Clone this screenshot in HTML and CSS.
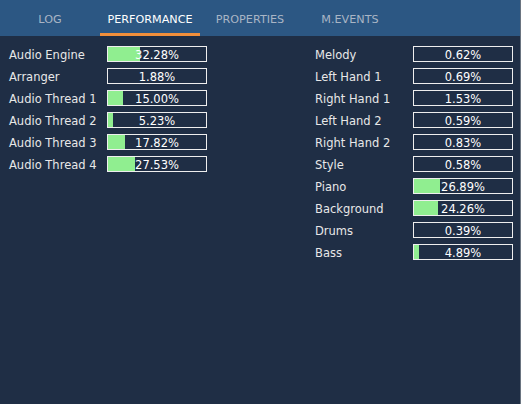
FILE: index.html
```html
<!DOCTYPE html>
<html lang="en">
<head>
    <meta charset="UTF-8">
    <title>Performance</title>
    <link rel="stylesheet" href="styles.css">
</head>
<body>
    <div class="panel">
        <div class="tabs">
            <div class="tab">LOG</div>
            <div class="tab active">PERFORMANCE</div>
            <div class="tab">PROPERTIES</div>
            <div class="tab">M.EVENTS</div>
        </div>

        <div class="content">
            <div class="column">
                <div class="row"><span class="label">Audio Engine</span><div class="bar"><div class="fill" style="width: 32.28%"></div><span>32.28%</span></div></div>
                <div class="row"><span class="label">Arranger</span><div class="bar"><div class="fill" style="width: 0%"></div><span>1.88%</span></div></div>
                <div class="row"><span class="label">Audio Thread 1</span><div class="bar"><div class="fill" style="width: 15%"></div><span>15.00%</span></div></div>
                <div class="row"><span class="label">Audio Thread 2</span><div class="bar"><div class="fill" style="width: 5.23%"></div><span>5.23%</span></div></div>
                <div class="row"><span class="label">Audio Thread 3</span><div class="bar"><div class="fill" style="width: 17.82%"></div><span>17.82%</span></div></div>
                <div class="row"><span class="label">Audio Thread 4</span><div class="bar"><div class="fill" style="width: 27.53%"></div><span>27.53%</span></div></div>
            </div>
            <div class="column">
                <div class="row"><span class="label">Melody</span><div class="bar"><div class="fill" style="width: 0%"></div><span>0.62%</span></div></div>
                <div class="row"><span class="label">Left Hand 1</span><div class="bar"><div class="fill" style="width: 0%"></div><span>0.69%</span></div></div>
                <div class="row"><span class="label">Right Hand 1</span><div class="bar"><div class="fill" style="width: 0%"></div><span>1.53%</span></div></div>
                <div class="row"><span class="label">Left Hand 2</span><div class="bar"><div class="fill" style="width: 0%"></div><span>0.59%</span></div></div>
                <div class="row"><span class="label">Right Hand 2</span><div class="bar"><div class="fill" style="width: 0%"></div><span>0.83%</span></div></div>
                <div class="row"><span class="label">Style</span><div class="bar"><div class="fill" style="width: 0%"></div><span>0.58%</span></div></div>
                <div class="row"><span class="label">Piano</span><div class="bar"><div class="fill" style="width: 26.89%"></div><span>26.89%</span></div></div>
                <div class="row"><span class="label">Background</span><div class="bar"><div class="fill" style="width: 24.26%"></div><span>24.26%</span></div></div>
                <div class="row"><span class="label">Drums</span><div class="bar"><div class="fill" style="width: 0%"></div><span>0.39%</span></div></div>
                <div class="row"><span class="label">Bass</span><div class="bar"><div class="fill" style="width: 4.89%"></div><span>4.89%</span></div></div>
            </div>
        </div>
    </div>
</body>
</html>
```

FILE: styles.css
```css
html, body {
    margin: 0;
    height: 100%;
}
body {
    font-family: "DejaVu Sans", Verdana, sans-serif;
    font-size: 11.5px;
    background-color: #1f2e45;
    color: #e8e8e8;
}
.panel {
    height: 100%;
    border-right: 1px solid #6a7480;
    box-sizing: border-box;
}
.tabs {
    display: flex;
    height: 36px;
    background-color: #2c5783;
}
.tab {
    width: 100px;
    text-align: center;
    line-height: 39px;
    font-size: 11.2px;
    color: #a9b5c5;
    box-sizing: border-box;
}
.tab.active {
    color: #fff;
    border-bottom: 3px solid #f28f3b;
}
.content {
    display: flex;
    padding: 10px 0 0 9px;
}
.column {
    width: 306px;
}
.column + .column {
    width: auto;
}
.row {
    display: flex;
    align-items: center;
    height: 16px;
    margin-bottom: 6px;
}
.label {
    width: 98px;
    padding-top: 2px;
    white-space: nowrap;
}
.bar {
    position: relative;
    width: 100px;
    height: 16px;
    border: 1px solid #eee;
    box-sizing: border-box;
}
.fill {
    height: 100%;
    background-color: #90ee90;
}
.bar span {
    position: absolute;
    left: 0;
    right: 0;
    top: 1px;
    line-height: 14px;
    text-align: center;
    color: #fff;
}
```
